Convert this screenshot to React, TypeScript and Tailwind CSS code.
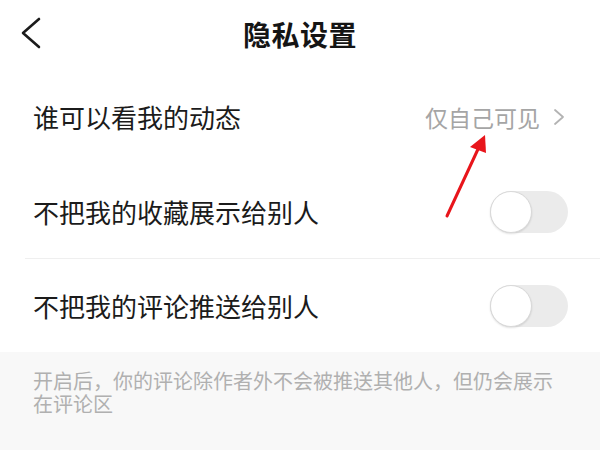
const font = { fontFamily: '"Noto Sans CJK SC", "Noto Sans", sans-serif' };
const noteFont = { fontFamily: '"Liberation Sans", "Noto Sans CJK SC", sans-serif' };

function Toggle() {
  return (
    <div className="relative h-[42px] w-[78px] rounded-full bg-[#ebebeb]">
      <div className="absolute left-0 top-0 h-[42px] w-[42px] rounded-full border border-[#d9d9d9] bg-white shadow-[0_1px_2px_rgba(0,0,0,0.12)]" />
    </div>
  );
}

export default function App() {
  return (
    <div className="relative h-[450px] w-[600px] overflow-hidden bg-white text-[#1b1b1b]" style={font}>
      <header className="relative flex h-[68px] items-center justify-center">
        <svg className="absolute left-[20px] top-[17px]" width="24" height="34" viewBox="0 0 24 34" fill="none">
          <polyline points="19,2 3,16 19,30" stroke="#1b1b1b" strokeWidth="2.6" strokeLinecap="round" strokeLinejoin="round" />
        </svg>
        <h1 className="text-[28px] font-bold leading-none tracking-[0.5px] text-[#151515]">隐私设置</h1>
      </header>

      <div className="flex h-[98px] items-center justify-between pl-[33px] pr-[34px]">
        <span className="text-[26px] leading-none">谁可以看我的动态</span>
        <div className="flex items-center gap-[12px]">
          <span className="text-[23px] leading-none text-[#a5a5a5]">仅自己可见</span>
          <svg width="14" height="18" viewBox="0 0 14 18" fill="none">
            <polyline points="3,2 11,9 3,16" stroke="#b3b3b3" strokeWidth="1.8" strokeLinecap="round" strokeLinejoin="round" />
          </svg>
        </div>
      </div>

      <div className="flex h-[92px] items-center justify-between pl-[33px] pr-[32px]">
        <span className="text-[26px] leading-none">不把我的收藏展示给别人</span>
        <Toggle />
      </div>

      <div className="ml-[25px] h-px bg-[#efefef]" />

      <div className="flex h-[93px] items-center justify-between pl-[33px] pr-[32px]">
        <span className="text-[26px] leading-none">不把我的评论推送给别人</span>
        <Toggle />
      </div>

      <div className="h-[98px] bg-[#f8f8f8] px-[33px] pt-[19px] text-[20px] leading-[23px] text-[#b0b0b0]" style={noteFont}>
        <p className="whitespace-nowrap">开启后，你的评论除作者外不会被推送其他人，但仍会展示</p>
        <p className="whitespace-nowrap">在评论区</p>
      </div>

      <svg className="pointer-events-none absolute left-0 top-0" width="600" height="450" viewBox="0 0 600 450">
        <line x1="447" y1="216" x2="479" y2="147" stroke="#e8151b" strokeWidth="3" strokeLinecap="round" />
        <polygon points="485,135 470,147 486,153" fill="#e8151b" />
      </svg>
    </div>
  );
}
